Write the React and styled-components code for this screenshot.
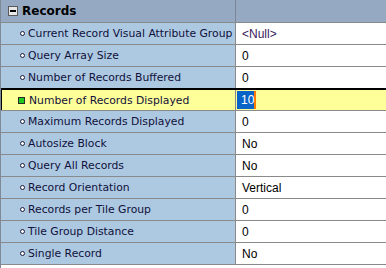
import React from "react";
import styled, { createGlobalStyle } from "styled-components";

const GlobalStyle = createGlobalStyle`
  html, body {
    margin: 0;
    padding: 0;
    background: #ffffff;
  }
`;

const Sheet = styled.div`
  width: 386px;
  height: 268px;
  overflow: hidden;
  border-left: 1px solid #7f8a96;
  box-sizing: border-box;
  font-family: "DejaVu Sans", Verdana, sans-serif;
`;

const Row = styled.div`
  display: grid;
  grid-template-columns: 235px 1fr;
  height: ${(p) => (p.$header ? "23px" : p.$selected ? "23px" : "22px")};
  box-sizing: border-box;
  border-bottom: 1px solid #8a8a8a;
  border-top: ${(p) => (p.$selected ? "2px solid #000000" : "none")};
  margin-top: ${(p) => (p.$selected ? "-1px" : "0")};
`;

const HeaderCell = styled.div`
  display: flex;
  align-items: center;
  gap: 4px;
  padding-left: 7px;
  background: #95a9c3;
  border-right: 1px solid #7d8794;
  font-size: 12px;
  font-weight: bold;
  color: #000000;
`;

const HeaderFill = styled.div`
  background: #95a9c3;
`;

const MinusBox = styled.span`
  width: 10px;
  height: 10px;
  box-sizing: border-box;
  border: 1px solid #5a5a5a;
  background: #e8e8e8;
  position: relative;
  &::after {
    content: "";
    position: absolute;
    left: 1px;
    right: 1px;
    top: 3px;
    height: 2px;
    background: #000000;
  }
`;

const NameCell = styled.div`
  display: flex;
  align-items: center;
  padding-left: ${(p) => (p.$selected ? "17px" : "19px")};
  gap: ${(p) => (p.$selected ? "4px" : "3px")};
  background: ${(p) => (p.$selected ? "#ffff99" : "#adc9e2")};
  border-right: 1px solid #8a8a8a;
  box-shadow: ${(p) => (p.$selected ? "inset 1px 0 0 #000000" : "none")};
  font-size: 10.8px;
  color: #10103a;
  white-space: nowrap;
  overflow: hidden;
`;

const Bullet = styled.span`
  width: 3px;
  height: 3px;
  border-radius: 50%;
  border: 1px solid #1a1a3a;
  background: #ffffff;
  flex: none;
`;

const GreenMark = styled.span`
  width: 7px;
  height: 7px;
  box-sizing: border-box;
  border: 1px solid #2a2a2a;
  background: #1ecb1e;
  flex: none;
`;

const ValueCell = styled.div`
  display: flex;
  align-items: center;
  padding-left: 6px;
  background: ${(p) => (p.$selected ? "#ffff99" : "#ffffff")};
  font-family: "Liberation Sans", Arial, sans-serif;
  font-size: 12px;
  color: ${(p) => (p.$null ? "#3a2060" : "#000000")};
`;

const Highlight = styled.span`
  margin-left: -5px;
  padding: 2px 0 2px 4px;
  background: #0a64c8;
  color: #ffffff;
  border-right: 2px solid #ff7a00;
`;

const props = [
  ["Current Record Visual Attribute Group", "<Null>"],
  ["Query Array Size", "0"],
  ["Number of Records Buffered", "0"],
  ["Number of Records Displayed", "10"],
  ["Maximum Records Displayed", "0"],
  ["Autosize Block", "No"],
  ["Query All Records", "No"],
  ["Record Orientation", "Vertical"],
  ["Records per Tile Group", "0"],
  ["Tile Group Distance", "0"],
  ["Single Record", "No"],
];

const App = () => {
  return (
    <>
      <GlobalStyle />
      <Sheet>
        <Row $header>
          <HeaderCell>
            <MinusBox />
            Records
          </HeaderCell>
          <HeaderFill />
        </Row>
        {props.map(([name, value], i) => {
          const selected = i === 3;
          return (
            <Row key={name} $selected={selected}>
              <NameCell $selected={selected}>
                {selected ? <GreenMark /> : <Bullet />}
                {name}
              </NameCell>
              <ValueCell $selected={selected} $null={value === "<Null>"}>
                {selected ? <Highlight>{value}</Highlight> : value}
              </ValueCell>
            </Row>
          );
        })}
      </Sheet>
    </>
  );
};

export default App;
